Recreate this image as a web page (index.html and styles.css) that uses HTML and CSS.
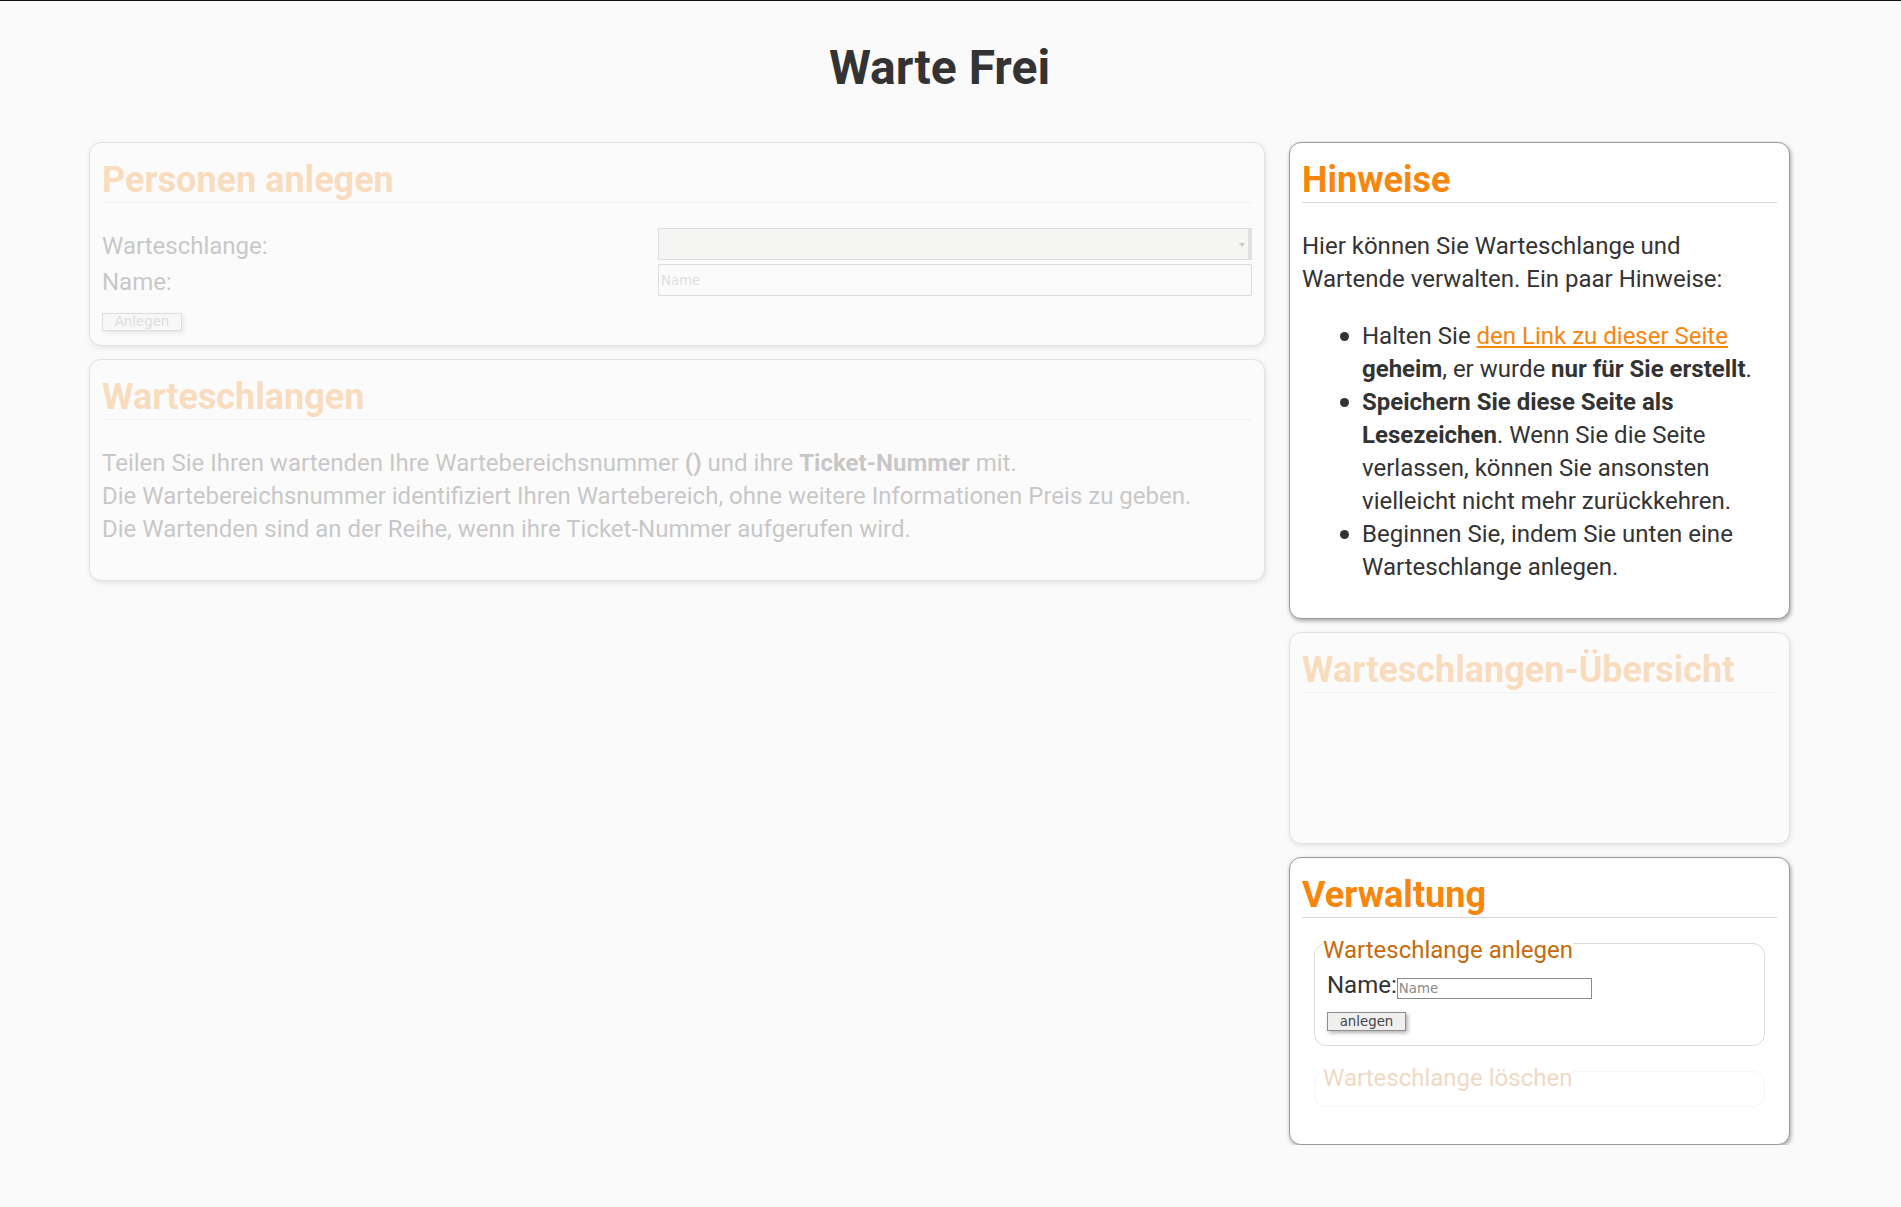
FILE: index.html
```html
<!DOCTYPE html>
<html lang="de">
<head>
<meta charset="utf-8">
<title>Warte Frei</title>
<link rel="stylesheet" href="styles.css">
</head>
<body>
<div class="page">
  <h1 class="title">Warte Frei</h1>
  <div class="columns">
    <div class="col">
      <section class="card faded">
        <h2 class="card-title">Personen anlegen</h2>
        <div class="form-grid">
          <label class="form-label">Warteschlange:</label>
          <div class="select-box"><span class="select-arrow"></span></div>
          <label class="form-label">Name:</label>
          <input class="text-input" type="text" placeholder="Name">
        </div>
        <button class="btn btn-wide" type="button">Anlegen</button>
      </section>
      <section class="card faded">
        <h2 class="card-title">Warteschlangen</h2>
        <p class="card-text">Teilen Sie Ihren wartenden Ihre Wartebereichsnummer <b>()</b> und ihre <b>Ticket-Nummer</b> mit.<br>Die Wartebereichsnummer identifiziert Ihren Wartebereich, ohne weitere Informationen Preis zu geben.<br>Die Wartenden sind an der Reihe, wenn ihre Ticket-Nummer aufgerufen wird.</p>
      </section>
    </div>
    <div class="col">
      <section class="card">
        <h2 class="card-title">Hinweise</h2>
        <p class="card-text">Hier können Sie Warteschlange und Wartende verwalten. Ein paar Hinweise:</p>
        <ul class="hint-list">
          <li class="hint-item">Halten Sie <a class="link" href="#">den Link zu dieser Seite</a> <b>geheim</b>, er wurde <b>nur für Sie erstellt</b>.</li>
          <li class="hint-item"><b>Speichern Sie diese Seite als Lesezeichen</b>. Wenn Sie die Seite verlassen, können Sie ansonsten vielleicht nicht mehr zurückkehren.</li>
          <li class="hint-item">Beginnen Sie, indem Sie unten eine Warteschlange anlegen.</li>
        </ul>
      </section>
      <section class="card faded">
        <h2 class="card-title">Warteschlangen-Übersicht</h2>
        <div class="overview-body"></div>
      </section>
      <section class="card">
        <h2 class="card-title">Verwaltung</h2>
        <fieldset class="group">
          <legend class="group-legend">Warteschlange anlegen</legend>
          <div class="inline-row"><label class="inline-label">Name:</label><input class="small-input" type="text" placeholder="Name"></div>
          <button class="btn btn-small" type="button">anlegen</button>
        </fieldset>
        <fieldset class="group group-empty faded">
          <legend class="group-legend">Warteschlange löschen</legend>
        </fieldset>
      </section>
    </div>
  </div>
</div>
</body>
</html>
```
FILE: styles.css
```css
html, body {
  margin: 0;
  padding: 0;
}
body {
  background: #fafafa;
  border-top: 1px solid #111;
  font-family: Roboto, "Liberation Sans", sans-serif;
  font-size: 24px;
  line-height: 1.375;
  color: #333;
}
.page {
  margin-left: 89px;
  width: 1701px;
}
.title {
  margin: 38px 0 46px;
  text-align: center;
  font-size: 48px;
  font-weight: 700;
  line-height: normal;
  color: #333;
}
.columns {
  display: grid;
  grid-template-columns: 1176px 501px;
  column-gap: 24px;
  align-items: start;
}
.col {
  display: flex;
  flex-direction: column;
  gap: 13px;
}
.card {
  background: #fff;
  border: 1px solid #9a9a9a;
  border-radius: 12px;
  box-shadow: 1px 2px 4px rgba(0, 0, 0, 0.35);
  padding: 16px 12px 12px;
}
.faded {
  opacity: 0.25;
}
.card-title {
  margin: 0;
  font-size: 36px;
  font-weight: 700;
  line-height: 43px;
  color: #f7860d;
  border-bottom: 1px solid #d8d8d8;
}
.card-text {
  margin: 27px 0 22px;
}
.hint-list {
  margin: 24px 0 22px;
  padding-left: 60px;
  list-style: none;
}
.hint-item {
  position: relative;
}
.hint-item::before {
  content: "";
  position: absolute;
  left: -22px;
  top: 12px;
  width: 9px;
  height: 9px;
  border-radius: 50%;
  background: #333;
}
.link {
  color: #f7860d;
}
.form-grid {
  display: grid;
  grid-template-columns: 556px 1fr;
  grid-auto-rows: 32px;
  row-gap: 4px;
  margin-top: 25px;
}
.form-label {
  align-self: end;
  line-height: 28px;
}
.select-box {
  position: relative;
  box-sizing: border-box;
  border: 1px solid #888;
  border-right: 4px solid #999;
  background: #e9e9e6;
}
.select-arrow {
  position: absolute;
  right: 3px;
  top: 14px;
  width: 0;
  height: 0;
  border-left: 3px solid transparent;
  border-right: 3px solid transparent;
  border-top: 4px solid #333;
}
.text-input {
  box-sizing: border-box;
  width: 100%;
  height: 32px;
  margin: 0;
  border: 1px solid #888;
  background: #fff;
  padding: 0 2px;
  font-family: "DejaVu Sans", sans-serif;
  font-size: 13.33px;
  color: #333;
}
.text-input::placeholder,
.small-input::placeholder {
  color: #8a8a8a;
}
.btn {
  display: block;
  box-sizing: border-box;
  padding: 0;
  border: 1px solid #8e8e8e;
  background: #efefef;
  box-shadow: 2px 2px 4px rgba(0, 0, 0, 0.3);
  font-family: "DejaVu Sans", sans-serif;
  font-size: 13.33px;
  color: #444;
  line-height: 1;
}
.btn-wide {
  width: 80px;
  height: 18px;
  margin: 17px 0 2px;
  color: #888;
}
.btn-small {
  width: 79px;
  height: 19px;
  margin-top: 13px;
}
.overview-body {
  height: 138px;
}
.group {
  margin: 4px 12px 0;
  padding: 7px 12px 14px;
  border: 1px solid #dcdcdc;
  border-radius: 12px;
  min-width: 0;
}
.group-empty {
  padding-bottom: 7px;
  margin-bottom: 25px;
}
.group-legend {
  padding: 14px 0 0;
  margin-left: -4px;
  color: #c66a0c;
  line-height: normal;
}
.inline-row {
  line-height: 28px;
}
.inline-label {
  color: #333;
}
.small-input {
  box-sizing: border-box;
  width: 195px;
  height: 21px;
  margin: 0;
  padding: 0 1px;
  border: 1px solid #8a8a8a;
  background: #fff;
  font-family: "DejaVu Sans", sans-serif;
  font-size: 13.33px;
  vertical-align: baseline;
}
```
